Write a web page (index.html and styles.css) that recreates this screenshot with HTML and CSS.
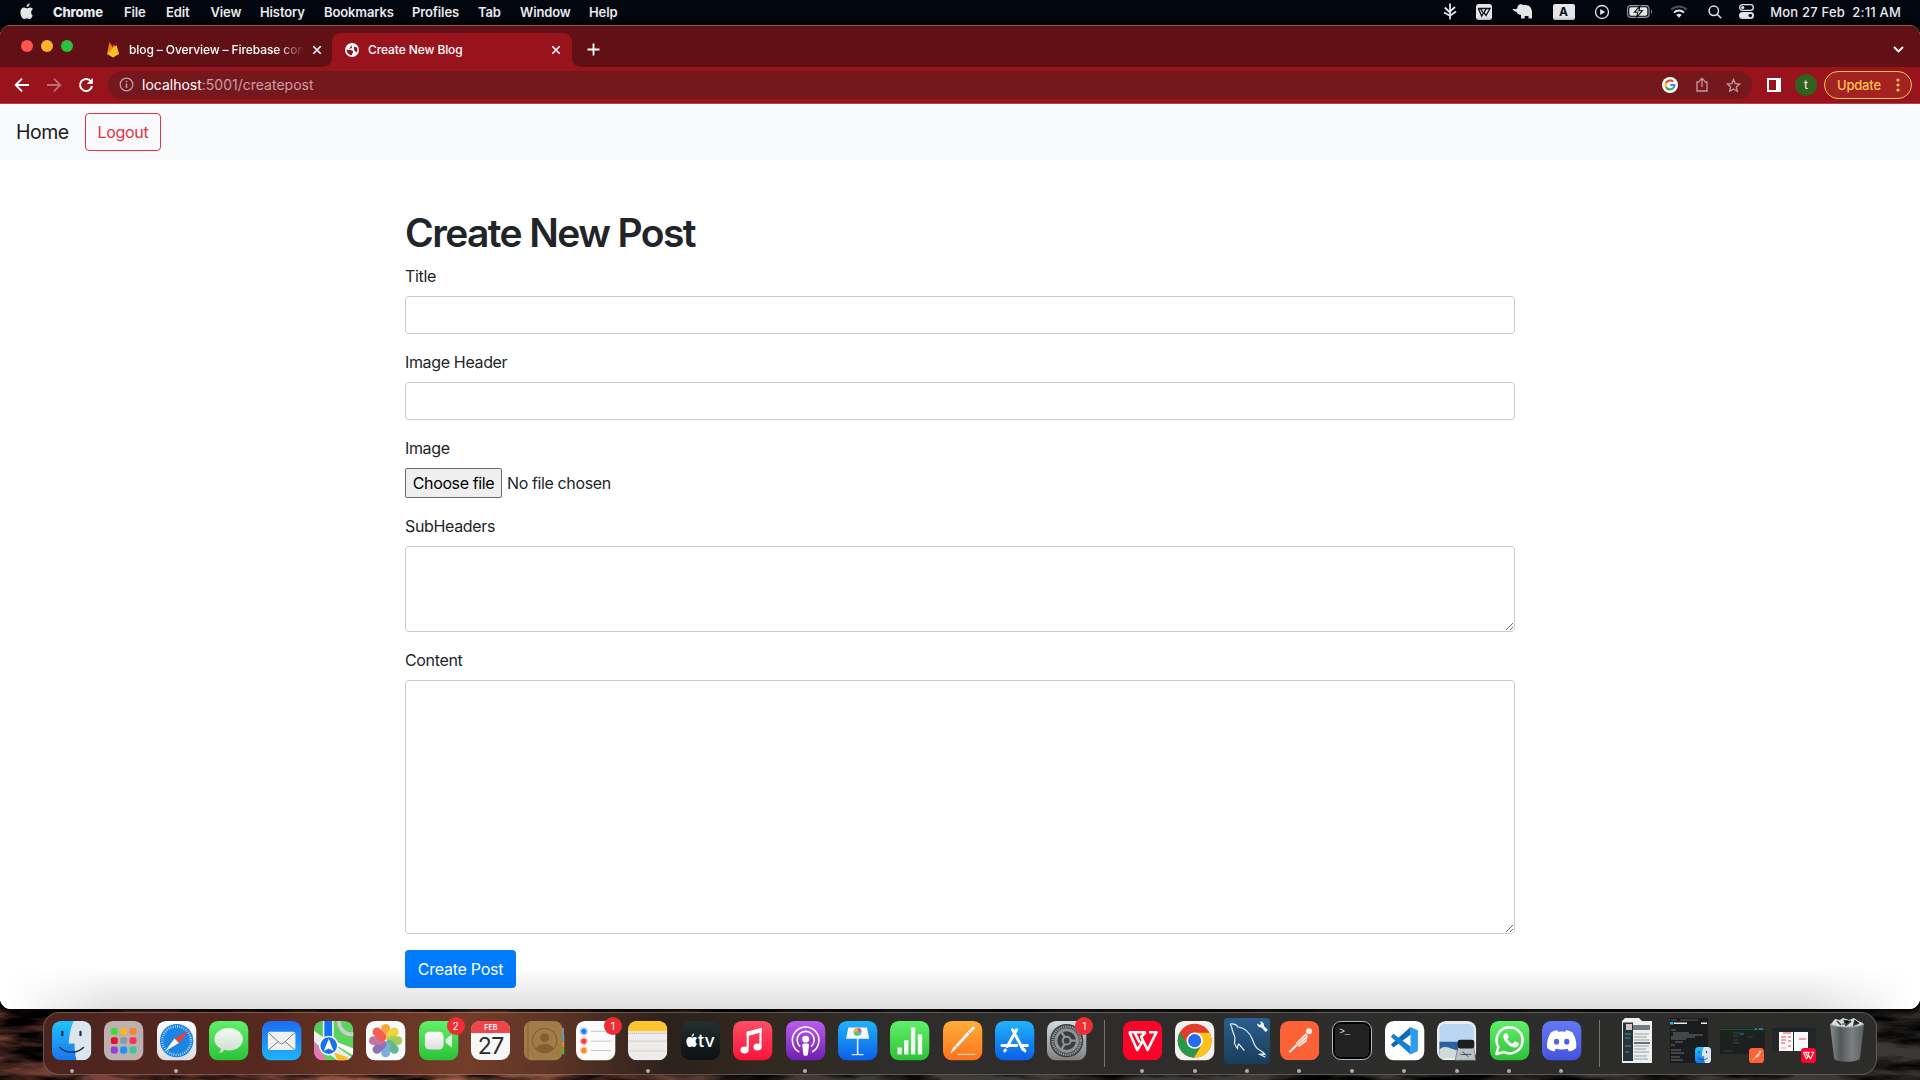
FILE: index.html
```html
<!DOCTYPE html>
<html lang="en">
<head>
<meta charset="utf-8">
<title>Create New Blog</title>
<link rel="stylesheet" href="styles.css">
</head>
<body>
<svg class="defs" width="0" height="0" aria-hidden="true">
  <defs>
    <linearGradient id="gGreen" x2="0" y2="1"><stop stop-color="#62f06a"/><stop offset="1" stop-color="#2bc237"/></linearGradient>
    <linearGradient id="gBlue" x2="0" y2="1"><stop stop-color="#1e6bf0"/><stop offset="1" stop-color="#1eb4fb"/></linearGradient>
    <linearGradient id="gSky" x2="0" y2="1"><stop stop-color="#20b4fb"/><stop offset="1" stop-color="#0b5ee8"/></linearGradient>
    <linearGradient id="gFinder" x2="0" y2="1"><stop stop-color="#1fc4fb"/><stop offset="1" stop-color="#1a74ee"/></linearGradient>
    <linearGradient id="gWhite" x2="0" y2="1"><stop stop-color="#fff"/><stop offset="1" stop-color="#dcdcdc"/></linearGradient>
    <linearGradient id="gRed" x2="0" y2="1"><stop stop-color="#fb5068"/><stop offset="1" stop-color="#fa1238"/></linearGradient>
    <linearGradient id="gPurple" x2="0" y2="1"><stop stop-color="#bc5cf0"/><stop offset="1" stop-color="#6f20b0"/></linearGradient>
    <linearGradient id="gOrange" x2="0" y2="1"><stop stop-color="#ffae38"/><stop offset="1" stop-color="#fc7320"/></linearGradient>
    <linearGradient id="gGrey" x2="0" y2="1"><stop stop-color="#cfdde4"/><stop offset="1" stop-color="#82807e"/></linearGradient>
    <linearGradient id="gSql" x2="0" y2="1"><stop stop-color="#2a5f8f"/><stop offset="1" stop-color="#1a3c58"/></linearGradient>
    <linearGradient id="gDiscord" x2="0" y2="1"><stop stop-color="#6478f5"/><stop offset="1" stop-color="#4454dc"/></linearGradient>
    <linearGradient id="gTrash"><stop stop-color="#8a8d8e"/><stop offset=".3" stop-color="#55585a"/><stop offset=".65" stop-color="#7d8081"/><stop offset="1" stop-color="#5b5e60"/></linearGradient>
    <clipPath id="tile"><rect width="40" height="40" rx="9"/></clipPath>
    <symbol id="apple" viewBox="0 0 14 17"><path d="M9.6.3c.1 1.1-.3 2-.9 2.700-.6.7-1.400 1.200-2.200 1.100-.1-1 .3-1.900.9-2.600C8 .8 8.900.4 9.600.300zM12.700 12.400c-.8 1.900-1.800 3.800-3.100 3.800-1.200 0-1.500-.7-2.700-.7s-1.600.7-2.700.7C2.300 16.200.4 12.500.4 9.300c0-3 1.800-4.900 3.800-4.900 1.200 0 2.100.8 2.900.8s1.700-.8 3.100-.8c1.100 0 2.100.6 2.800 1.500-2.500 1.500-2.100 5.200-.3 6.500z"/></symbol>
    <symbol id="close" viewBox="0 0 10 10"><path d="M1.300 1.300l7.400 7.400M8.700 1.300L1.300 8.700" stroke="#fff" stroke-width="1.600" fill="none"/></symbol>
    <symbol id="wps" viewBox="0 0 40 40"><rect width="40" height="40" rx="9" fill="#fd0328"/><path d="M6 11.500h17M6.500 11.500L14.500 29.500 20 20.500M12 12l5 10M26.500 11.500H34L25 29.500 18.500 16 23 11.500" fill="none" stroke="#fff" stroke-width="2.700" stroke-linejoin="round"/></symbol>
    <symbol id="finder" viewBox="0 0 40 40"><g clip-path="url(#tile)"><rect width="40" height="40" fill="url(#gFinder)"/><path d="M22 0C18.500 8 17.500 15 17 23h6c-.2 6 .3 11 2 17h15V0z" fill="#dde5ee"/><path d="M10.500 11v3.500M29 11v3.500" stroke="#17334d" stroke-width="2.300" stroke-linecap="round"/><path d="M8 27c7 6.500 17 6.500 24 0" fill="none" stroke="#17334d" stroke-width="1.600" stroke-linecap="round"/></g></symbol>
    <symbol id="postman" viewBox="0 0 40 40"><rect width="40" height="40" rx="9" fill="#fd6237"/><g fill="#fff0ea"><circle cx="29.500" cy="10.500" r="3"/><path d="M26 12.500l2.300 2.500-1.500 6-7.500 5.500-3.500-3.500z"/><path d="M17 24.500l-7.500 7.300" stroke="#fff0ea" stroke-width="2.200"/></g><path d="M17 23.500l9.500-8M19 25l8-7" stroke="#e66a45" stroke-width=".7"/></symbol>
    <filter id="rock" x="0" y="0" width="100%" height="100%"><feTurbulence type="fractalNoise" baseFrequency=".014 .07" numOctaves="5" seed="7"/><feColorMatrix values="0 0 0 0 0  0 0 0 0 0  0 0 0 0 0  2.800 0 0 0 -.95"/></filter>
  </defs>
</svg>

<div class="screen">
  <svg class="wallpaper" width="1920" height="90"><rect width="1920" height="90" filter="url(#rock)"/></svg>

  <header class="menubar">
    <nav class="menus">
      <span><svg class="apple" width="14" height="17"><use href="#apple"/></svg></span>
      <b>Chrome</b><span>File</span><span>Edit</span><span>View</span><span>History</span><span>Bookmarks</span><span>Profiles</span><span>Tab</span><span>Window</span><span>Help</span>
    </nav>
    <div class="status">
      <svg width="14" height="17" viewBox="0 0 14 17" fill="none" stroke="#e4e6e9" stroke-width="1.800"><path d="M7 .5v16M1.800 4.500L7 9.500M7 8.500l5-4.500M1 9.500L7 12.800l6-4.300"/></svg>
      <svg width="16" height="16" viewBox="0 0 16 16"><rect width="16" height="16" rx="3" fill="#e4e6e9"/><path d="M2 4.500h8.500L8 8.500l2 3 4-7h-3M2.300 4.500L5.700 12 10 5M4.500 4.500l2.200 4" fill="none" stroke="#0a0f18" stroke-width="1.300"/></svg>
      <svg width="21" height="17" viewBox="0 0 21 17" fill="#e4e6e9"><path d="M.5 5.800C2.500 6.500 4 6.300 5.300 5.500 5.300 2.500 7 .8 9.500 1.300c1 .2 1.500.8 2 1C16 1 20 4 20 9v6.500h-3.500V13h-3.800v2.500H9V12C6 11.800 5 10.500 4.700 8.800 3 9 1.200 7.800.5 5.800z"/></svg>
      <span class="input-source">A</span>
      <svg width="16" height="16" viewBox="0 0 16 16"><circle cx="8" cy="8" r="6.500" fill="none" stroke="#e4e6e9" stroke-width="1.300"/><path d="M6.200 5v6l5-3z" fill="#e4e6e9"/></svg>
      <svg width="26" height="13" viewBox="0 0 26 13"><rect x=".6" y=".6" width="21.500" height="11.800" rx="3.300" fill="none" stroke="#9b9ea3" stroke-width="1.100"/><rect x="2.300" y="2.300" width="18" height="8.400" rx="1.700" fill="#e4e6e9"/><path d="M24 4.500c1.200.5 1.200 3.500 0 4z" fill="#9b9ea3"/><path d="M12.800 1.200L7.500 7.200h3.300L9.800 12l5.500-6.200h-3.400z" fill="#e4e6e9" stroke="#02070f" stroke-width="1.100"/></svg>
      <svg width="18" height="13" viewBox="0 0 18 13" fill="none" stroke-width="2"><path d="M1.300 4.700a10.800 10.800 0 0 1 15.400 0" stroke="#4d5157"/><path d="M4 7.600a7 7 0 0 1 10 0" stroke="#e4e6e9"/><path d="M6.400 10a3.600 3.600 0 0 1 5.200 0L9 12.700z" fill="#e4e6e9"/></svg>
      <svg width="14" height="14" viewBox="0 0 14 14" fill="none" stroke="#e4e6e9" stroke-width="1.500"><circle cx="5.800" cy="5.800" r="4.700"/><path d="M9.200 9.200l4 4"/></svg>
      <svg width="15" height="15" viewBox="0 0 15 15"><rect x=".7" y=".7" width="13.600" height="5.600" rx="2.800" fill="none" stroke="#e4e6e9" stroke-width="1.300"/><circle cx="3.700" cy="3.500" r="1.600" fill="#e4e6e9"/><rect y="8" width="15" height="7" rx="3.500" fill="#e4e6e9"/><circle cx="11.300" cy="11.500" r="1.800" fill="#02070f"/></svg>
      <span class="clock">Mon 27 Feb&nbsp; 2:11 AM</span>
    </div>
  </header>

  <section class="window">
    <div class="tabstrip">
      <div class="lights"><i class="red"></i><i class="yellow"></i><i class="green"></i></div>
      <div class="tab">
        <svg width="14" height="17" viewBox="0 0 14 17"><path d="M1 13L3.500 1l3 5L8 3.500 13 13z" fill="#f6820d"/><path d="M1 13l9.500-9 2.500 9-6 3.500z" fill="#fdbe2c"/></svg>
        <span class="tab-title fade">blog – Overview – Firebase con</span>
        <svg width="10" height="10"><use href="#close"/></svg>
      </div>
      <div class="tab active">
        <svg width="14" height="14" viewBox="0 0 14 14"><circle cx="7" cy="7" r="7" fill="#fff"/><path d="M6.500 1.500c-1 1.500 1 2 .5 3.200-.7 1-2.300.6-2.800 1.800 1 1 3.200.2 3.800 1.700.4 1.500-1 1.800-1.200 4C4 12 1.300 9.500 1.600 6.500l2.300.7M8.500 1.800l.6 2 2.800.6c1 2.200.5 4-.3 5l-2.300-2" fill="#99131d"/></svg>
        <span class="tab-title">Create New Blog</span>
        <svg width="10" height="10"><use href="#close"/></svg>
      </div>
      <svg class="plus" width="13" height="13" viewBox="0 0 13 13"><path d="M6.500.5v12M.5 6.500h12" stroke="#fff" stroke-width="1.800"/></svg>
      <svg class="chevron" width="11" height="7" viewBox="0 0 11 7"><path d="M1 1l4.500 4.500L10 1" fill="none" stroke="#fff" stroke-width="1.800"/></svg>
    </div>

    <div class="toolbar">
      <svg width="16" height="16" viewBox="0 0 16 16" fill="none" stroke="#fff" stroke-width="1.900"><path d="M15 8H2M8 1.700L1.700 8 8 14.300"/></svg>
      <svg width="16" height="16" viewBox="0 0 16 16" fill="none" stroke="#c46a70" stroke-width="1.800"><path d="M1 8h13M8 1.700L14.300 8 8 14.300"/></svg>
      <svg width="16" height="16" viewBox="0 0 16 16" fill="none" stroke="#fff" stroke-width="2"><path d="M13 4.500A6 6 0 1 0 14 9"/><path d="M14.800 1v6H8.800z" fill="#fff" stroke="none"/></svg>
      <div class="address">
        <svg width="15" height="15" viewBox="0 0 15 15"><circle cx="7.500" cy="7.500" r="6.300" fill="none" stroke="#b3a3a8" stroke-width="1.300"/><path d="M7.500 6.500V11M7.500 3.700v1.500" stroke="#b3a3a8" stroke-width="1.500"/></svg>
        <span class="url"><em>localhost</em>:5001/createpost</span>
        <svg class="google" width="16" height="16" viewBox="0 0 16 16"><circle cx="8" cy="8" r="8" fill="#fff"/><g fill="none" stroke-width="2.100"><path d="M11.200 4.700A4.500 4.500 0 0 0 4 6" stroke="#ea4335"/><path d="M4 6a4.500 4.500 0 0 0 0 4" stroke="#fbbc05"/><path d="M4 10a4.500 4.500 0 0 0 7 1.300" stroke="#34a853"/><path d="M11 11.300A4.500 4.500 0 0 0 12.500 8H8.200" stroke="#4285f4"/></g></svg>
        <svg width="12" height="15" viewBox="0 0 12 15" fill="none" stroke="#c39a9e" stroke-width="1.300"><path d="M3.500 5H1v9h10V5H8.500M6 10V1.500M3.300 4L6 1.300 8.700 4"/></svg>
        <svg width="15" height="14" viewBox="0 0 15 14"><path d="M7.500 1.500l1.700 4.100 4.400.4-3.300 2.900 1 4.300-3.800-2.300-3.800 2.300 1-4.300L1.400 6l4.400-.4z" fill="none" stroke="#c39a9e" stroke-width="1.300"/></svg>
      </div>
      <svg width="14" height="14" viewBox="0 0 14 14"><rect x="1" y="1" width="12" height="12" fill="#99131d" stroke="#fff" stroke-width="2"/><path d="M9 0h5v14H9z" fill="#fff"/></svg>
      <span class="avatar">t</span>
      <span class="update">Update<svg width="4" height="14" viewBox="0 0 4 14" fill="#fac44f"><circle cx="2" cy="2" r="1.600"/><circle cx="2" cy="7" r="1.600"/><circle cx="2" cy="12" r="1.600"/></svg></span>
    </div>

    <div class="page">
      <nav class="navbar"><a class="brand">Home</a><a class="logout">Logout</a></nav>
      <main class="container">
        <h1>Create New Post</h1>
        <div class="group"><label>Title</label><input class="control" type="text"></div>
        <div class="group"><label>Image Header</label><input class="control" type="text"></div>
        <div class="group"><label>Image</label>
          <div class="file"><span class="file-button">Choose file</span><span>No file chosen</span></div></div>
        <div class="group"><label>SubHeaders</label><textarea class="control sub"></textarea></div>
        <div class="group"><label>Content</label><textarea class="control content"></textarea></div>
        <a class="submit">Create Post</a>
      </main>
      <div class="dock-shade"></div>
    </div>
  </section>

  <footer class="dock">
    <div class="app running"><svg class="icon"><use href="#finder"/></svg></div>
    <div class="app"><svg class="icon" viewBox="0 0 40 40"><rect width="40" height="40" rx="9" fill="#bdb0b1"/>
      <g><rect x="7" y="7" width="7" height="7" rx="2" fill="#45d83c"/><rect x="16.500" y="7" width="7" height="7" rx="2" fill="#fcb524"/><rect x="26" y="7" width="7" height="7" rx="2" fill="#f6852a"/><rect x="7" y="16.500" width="7" height="7" rx="2" fill="#e2132b"/><rect x="16.500" y="16.500" width="7" height="7" rx="2" fill="#8c9ba3"/><rect x="26" y="16.500" width="7" height="7" rx="2" fill="#fb3561"/><rect x="7" y="26" width="7" height="7" rx="2" fill="#9440cf"/><rect x="16.500" y="26" width="7" height="7" rx="2" fill="#1e92fb"/><rect x="26" y="26" width="7" height="7" rx="2" fill="#37c99b"/></g></svg></div>
    <div class="app running"><svg class="icon" viewBox="0 0 40 40"><rect width="40" height="40" rx="9" fill="url(#gWhite)"/><circle cx="20" cy="20" r="17" fill="#1c85e4"/><circle cx="20" cy="20" r="14.500" fill="none" stroke="#bfe0fa" stroke-width="2.500" stroke-dasharray=".8 1.480"/><path d="M32.500 10L22.300 22.300l-4.500-4.600z" fill="#fb3b30"/><path d="M8 31l9.800-13.300 4.500 4.600z" fill="#f3f5f7"/></svg></div>
    <div class="app"><svg class="icon" viewBox="0 0 40 40"><rect width="40" height="40" rx="9" fill="url(#gGreen)"/><path d="M20 7c8.300 0 14.500 5 14.500 11.500S28.300 30 20 30c-1.500 0-3-.2-4.300-.5C14.500 31 12.500 32.500 10.500 32.500c1-1.300 1.500-3 1.300-4.700C8 25.700 5.500 22.500 5.500 18.500 5.500 12 11.700 7 20 7z" fill="url(#gWhite)" opacity=".92"/></svg></div>
    <div class="app"><svg class="icon" viewBox="0 0 40 40"><rect width="40" height="40" rx="9" fill="url(#gBlue)"/><rect x="6" y="11" width="28" height="18.500" rx="2" fill="#f0f1f2"/><path d="M6.700 12l11 10.200c1.500 1.300 3 1.300 4.600 0L33.300 12M7 29l9.500-8M33 29l-9.500-8" fill="none" stroke="#76797c" stroke-width="1"/></svg></div>
    <div class="app"><svg class="icon" viewBox="0 0 40 40"><g clip-path="url(#tile)"><rect width="40" height="40" fill="#5bd35c"/><path d="M0 0h10v19L0 11z" fill="#58c95b"/><path d="M0 10l40 28v4H26L0 21z" fill="#eceef0"/><path d="M0 20l13 20H0z" fill="#e975b8"/><path d="M24 40l-4-8 14 5 1 3z" fill="#fbbc25"/><path d="M9 0h11v22H9z" fill="#fff"/><path d="M10.500 0h8v18h-8z" fill="#1670f1"/><circle cx="38" cy="1" r="12.500" fill="none" stroke="#c9ccd0" stroke-width="4"/><path d="M20 20l20 8v7L20 23z" fill="#fff"/><circle cx="15" cy="25" r="10" fill="#fff"/><circle cx="15" cy="25" r="8.500" fill="#1873e8"/><path d="M15 18l5 12.500-5-2.500-5 2.500z" fill="#fff"/></g></svg></div>
    <div class="app"><svg class="icon" viewBox="0 0 40 40"><rect width="40" height="40" rx="9" fill="#fafafa"/><g opacity=".88"><rect x="15.500" y="3" width="9" height="16" rx="4.500" fill="#f99a26"/><rect x="15.500" y="3" width="9" height="16" rx="4.500" fill="#e8d02a" transform="rotate(45 20 20)"/><rect x="15.500" y="3" width="9" height="16" rx="4.500" fill="#9bc83e" transform="rotate(90 20 20)"/><rect x="15.500" y="3" width="9" height="16" rx="4.500" fill="#4fae7e" transform="rotate(135 20 20)"/><rect x="15.500" y="3" width="9" height="16" rx="4.500" fill="#6ba2d9" transform="rotate(180 20 20)"/><rect x="15.500" y="3" width="9" height="16" rx="4.500" fill="#7d62b4" transform="rotate(225 20 20)"/><rect x="15.500" y="3" width="9" height="16" rx="4.500" fill="#bd6396" transform="rotate(270 20 20)"/><rect x="15.500" y="3" width="9" height="16" rx="4.500" fill="#f4493f" transform="rotate(315 20 20)"/></g></svg></div>
    <div class="app"><svg class="icon" viewBox="0 0 40 40"><rect width="40" height="40" rx="9" fill="url(#gGreen)"/><rect x="6" y="11" width="19" height="18" rx="4.500" fill="url(#gWhite)"/><path d="M27 18.500l6.500-5v13.500L27 22z" fill="#def5e0"/></svg><span class="badge">2</span></div>
    <div class="app"><div class="icon calendar"><span class="month">FEB</span><span class="day">27</span></div></div>
    <div class="app"><svg class="icon" viewBox="0 0 40 40"><path d="M36 7h4.500v8H36z" fill="#8e9aa0"/><path d="M36 14h5v7h-5z" fill="#37a8e0"/><path d="M36 21h5v6h-5z" fill="#f08c22"/><path d="M36 27h5v7h-5z" fill="#3cb950"/><rect width="39" height="40" rx="8" fill="#a27c45"/><path d="M4 1v38" stroke="#7f5f33" stroke-width=".8"/><g fill="none" stroke="#785a30" stroke-width="1"><circle cx="21" cy="20" r="12.500"/></g><g fill="#80602f"><circle cx="21" cy="17" r="4.500"/><path d="M12 28c3-6 15-6 18 0-5 5-13 5-18 0z"/></g></svg></div>
    <div class="app"><svg class="icon" viewBox="0 0 40 40"><rect width="40" height="40" rx="9" fill="#fbfbfb"/><g stroke-width="1" fill="#157efb"><circle cx="8" cy="10.500" r="2.700"/><circle cx="8" cy="10.500" r="3.600" fill="none" stroke="#8fbcf0"/></g><g fill="#f33b40"><circle cx="8" cy="20.500" r="2.700"/><circle cx="8" cy="20.500" r="3.600" fill="none" stroke="#f4a5a6"/></g><g fill="#f58a1f"><circle cx="8" cy="30" r="2.700"/><circle cx="8" cy="30" r="3.600" fill="none" stroke="#f2c493"/></g><path d="M15 10.500h21M15 20.500h21M15 30h21" stroke="#c9c9c9" stroke-width="1"/></svg><span class="badge">1</span></div>
    <div class="app running"><svg class="icon" viewBox="0 0 40 40"><g clip-path="url(#tile)"><rect width="40" height="40" fill="#eeecea"/><path d="M0 0h40v10.500H0z" fill="#fdc62f"/><path d="M0 12.500h40" stroke="#a5a29c" stroke-dasharray="1 1"/><path d="M0 20.500h40M0 30.500h40" stroke="#d3d0cc"/></g></svg></div>
    <div class="app"><div class="icon tv"><svg width="12" height="15"><use href="#apple"/></svg>tv</div></div>
    <div class="app"><svg class="icon" viewBox="0 0 40 40"><rect width="40" height="40" rx="9" fill="url(#gRed)"/><path d="M15 28V12l13-3.500v17" fill="none" stroke="#fff" stroke-width="2.200"/><path d="M14 11l15-4v4.500l-15 4z" fill="#fff"/><ellipse cx="11.800" cy="29.500" rx="4.200" ry="3.500" fill="#fff"/><ellipse cx="25" cy="26.500" rx="4.200" ry="3.500" fill="#fff"/></svg></div>
    <div class="app running"><svg class="icon" viewBox="0 0 40 40"><rect width="40" height="40" rx="9" fill="url(#gPurple)"/><g fill="none" stroke="#fff" stroke-width="1.600"><path d="M13.500 31.500a13.500 13.500 0 1 1 13 0"/><path d="M14.500 26a8.700 8.700 0 1 1 11 0"/></g><circle cx="20" cy="18.500" r="3.500" fill="#fff"/><path d="M16.500 24.500c0-2 7-2 7 0L22.300 34c-.4 1.800-4.200 1.800-4.600 0z" fill="#fff"/></svg></div>
    <div class="app"><svg class="icon" viewBox="0 0 40 40"><rect width="40" height="40" rx="9" fill="url(#gSky)"/><path d="M19.200 17h1.600v17h-1.600zM14 33.500h12v1.300H14z" fill="#dfe8f2"/><path d="M10.500 6.500h19l2.300 11.500H8.200z" fill="#f5f7f9"/><circle cx="20" cy="11" r="4" fill="#4db6ec"/><path d="M20 11V7a4 4 0 0 1 4 4z" fill="#f15c50"/><path d="M20 11v4a4 4 0 0 1-4-4z" fill="#60c851"/><path d="M20 11h-4a4 4 0 0 1 4-4z" fill="#f3b92d"/></svg></div>
    <div class="app"><svg class="icon" viewBox="0 0 40 40"><rect width="40" height="40" rx="9" fill="url(#gGreen)"/><path d="M7.500 27h4.500v7H7.500zM14.300 19.500h4.500V34h-4.500zM21.300 6.500h4.500V34h-4.500zM28.300 13.500h4.500V34h-4.500z" fill="#f3f6f3"/></svg></div>
    <div class="app"><svg class="icon" viewBox="0 0 40 40"><rect width="40" height="40" rx="9" fill="url(#gOrange)"/><path d="M32.500 7.500L12 29.500l-4.500 3.500 2.500-5.500L29.500 6c1.200-1.200 4 .2 3 1.500z" fill="#f8f4ef"/><path d="M25 11l4 3.500M12 25l3 2.500" stroke="#a99a8c" stroke-width=".8"/><path d="M15 34h18" stroke="#fbd3ac" stroke-width="1.200"/></svg></div>
    <div class="app"><svg class="icon" viewBox="0 0 40 40"><rect width="40" height="40" rx="9" fill="url(#gSky)"/><g stroke="#fff" stroke-width="3" stroke-linecap="round"><path d="M18 9l10.500 20M22 9L12.500 26M7 25h15M28 25h5M29.500 29l1 1.500M10.500 29.500l-.5 1"/></g></svg></div>
    <div class="app"><svg class="icon" viewBox="0 0 40 40"><rect width="40" height="40" rx="9" fill="url(#gGrey)"/><circle cx="20" cy="20" r="17" fill="#3a3d3f"/><circle cx="20" cy="20" r="14.300" fill="none" stroke="#909598" stroke-width="2.500" stroke-dasharray="1.500 .75"/><circle cx="20" cy="20" r="11" fill="none" stroke="#8f9497" stroke-width="3"/><circle cx="20" cy="20" r="4" fill="none" stroke="#8f9497" stroke-width="2"/><path d="M24 20h8M18 16.500L14 10M18 23.500L14 30" stroke="#8f9497" stroke-width="2.300"/></svg><span class="badge">1</span></div>
    <div class="separator"></div>
    <div class="app running"><svg class="icon"><use href="#wps"/></svg></div>
    <div class="app running"><svg class="icon" viewBox="0 0 40 40"><rect width="40" height="40" rx="9" fill="#f1f1f0"/><circle cx="20" cy="20" r="17.300" fill="#e33b2e"/><path d="M20 12h15.300A17.300 17.300 0 0 1 19 37.300l8.300-13.100z" fill="#fcc31e"/><path d="M12.800 24.300L5 11.500A17.300 17.300 0 0 0 19 37.300l8-13z" fill="#259a4a"/><circle cx="20" cy="20" r="8.300" fill="#fff"/><circle cx="20" cy="20" r="6.700" fill="#216ee8"/></svg></div>
    <div class="app running"><svg class="icon wide" viewBox="0 0 46 46"><rect width="46" height="46" rx="4" fill="url(#gSql)"/><path d="M6 6c3-.5 6 0 8 3 7 1 12 6 14.500 12.500 1.500 4.500 2.500 8.500 7 10.500 2 1 4 2.500 5.500 4.500-2-.5-4-.5-5.500-.2l6 3M6 6c1 1.500 2 3 2 5 1 3 1.500 5 2.500 7 1 2 0 5 0 7 .5 2.500 1.500 4 3 5.500 0-2 .2-3 1-4.500 2 1 3.500 4.500 6 6.500" fill="none" stroke="#e7eff5" stroke-width="1.200"/><path d="M36 3.500c2.500 0 4.500 2 4 4.500l4 4-2.500 2-4-4.500c-2.300.3-4.500-1.500-4.500-4l3 1.500 1-1.500z" fill="#f0f5f8"/></svg></div>
    <div class="app running"><svg class="icon"><use href="#postman"/></svg></div>
    <div class="app running"><div class="icon terminal"><span>&gt;_</span></div></div>
    <div class="app running"><svg class="icon" viewBox="0 0 40 40"><rect width="40" height="40" rx="9" fill="#fff"/><path d="M26 6l7.500 3.500v21L26 34z" fill="#2f9cee"/><path d="M26 6L6 24l2.500 3L26 14z" fill="#0a6ab8"/><path d="M26 34L6 16l2.500-3L26 26z" fill="#1581d0"/></svg></div>
    <div class="app running"><svg class="icon" viewBox="0 0 40 40"><g clip-path="url(#tile)"><rect width="40" height="40" fill="#ececec"/><rect x="2.500" y="3" width="35" height="33" rx="5" fill="#b9d7f2"/><path d="M2.500 21h35v12a4 4 0 0 1-4 4h-27a4 4 0 0 1-4-4z" fill="#2e609d"/><path d="M2.500 29c6-5 10-1 15 0s8 4 10 9H6.500a4 4 0 0 1-4-4z" fill="#cfdad9"/></g><path d="M22 24h15l2.500 16h-21z" fill="#b9c2c8" stroke="#555" stroke-width=".6"/><rect x="21" y="19" width="17" height="9" rx="2.500" fill="#1c1d20"/><path d="M24 34h11M26 31.500l6 5" stroke="#454b50"/></svg></div>
    <div class="app running"><svg class="icon" viewBox="0 0 40 40"><rect width="40" height="40" rx="9" fill="url(#gGreen)"/><path d="M6.500 33.500l2-7A13.300 13.300 0 1 1 13.800 31.500z" fill="none" stroke="#fff" stroke-width="2.600" stroke-linejoin="round"/><path d="M15.500 12.500c1.300-.7 2-.2 2.500 1l1 2.500c.2.800-.8 1.800-1.300 2.300 1.200 2.300 3 3.800 5.200 4.800l1.800-2c.4-.4.8-.4 1.300-.2l3 1.600c.8.500.3 2.300-.4 3.200-4.600 4.500-15.700-4.400-15-10.500.2-1.200 1-2.200 1.900-2.700z" fill="#fff"/></svg></div>
    <div class="app running"><svg class="icon" viewBox="0 0 40 40"><rect width="40" height="40" rx="9" fill="url(#gDiscord)"/><path d="M15.500 9.500l.8 1.500c2.500-.4 4.900-.4 7.400 0l.8-1.500c2.500.4 4.500 1.100 6.500 2.300 3.200 5 4.400 10 3.800 15.700-2.200 1.800-4.500 3-7.300 3.500l-1.600-2.700c-3.700 1-8.100 1-11.800 0L12.500 31c-2.800-.5-5-1.700-7.300-3.500-.6-5.700.6-10.700 3.800-15.700 2-1.200 4-1.900 6.500-2.300z" fill="#fff"/><ellipse cx="14.800" cy="21" rx="2.700" ry="3" fill="#4f61e6"/><ellipse cx="25.200" cy="21" rx="2.700" ry="3" fill="#4f61e6"/></svg></div>
    <div class="separator"></div>
    <div class="app"><svg class="preview" width="30" height="46" viewBox="0 0 30 46"><path d="M0 4l3-3h14l3 3h10v42H0z" fill="#eef0f0"/><path d="M1 5.500h10V44H1z" fill="#24343b"/><path d="M11 8h17v5H11z" fill="#6f7d83"/><rect x="4" y="7" width="6" height="6" fill="#d8c5bc"/><path d="M12 17h15M12 20h13M12 23h15M12 29h15M12 32h12M12 35h15M12 39h13M12 42h14" stroke="#b3babd" stroke-width="1.400"/><path d="M12 26h16" stroke="#3a474d" stroke-width="1.500"/><path d="M3 17h6M3 21h5M3 29h6M3 35h4" stroke="#71818a"/></svg></div>
    <div class="app"><svg class="preview" width="46" height="46" viewBox="0 0 46 46"><path d="M4 1h38v45H4z" fill="#1b1c1d"/><path d="M5 3h6M14 3h18" stroke="#454648" stroke-width="1.500"/><rect x="4" y="5" width="3.500" height="2.500" fill="#22b1f7"/><path d="M8 6.300h13M35 6.300h6" stroke="#e9e9e9" stroke-width="1.500"/><path d="M5 13h5M7 16h16M7 18h30M5 20h24M5 22h15M9 25h8M5 28h4M5 33h10M5 36h13M5 40h9M5 43h12" stroke="#77797b" stroke-width=".9"/><svg x="29" y="30" width="16" height="16"><use href="#finder"/></svg></svg></div>
    <div class="app"><svg class="preview" width="46" height="46" viewBox="0 0 46 46"><path d="M1 11h45v26H1z" fill="#1c201f"/><path d="M1 12.500h45" stroke="#175235" stroke-width="1.500"/><path d="M14 16h8M14 19h6M28 20h6M14 23h5M14 26h7M4 34h10" stroke="#3b4241"/><path d="M21 17h4" stroke="#1b62a4" stroke-width="1.500"/><path d="M36 12h2M40 12h4" stroke="#2b8cd8" stroke-width="1.500"/><svg x="30" y="31" width="15" height="15"><use href="#postman"/></svg></svg></div>
    <div class="app"><svg class="preview" width="46" height="46" viewBox="0 0 46 46"><path d="M1 11h44v23H1z" fill="#242629"/><path d="M2 12.500h42" stroke="#15252e" stroke-width="2"/><path d="M8 15h14v19H8zM23 15h14v19H23z" fill="#fafafa"/><path d="M12 16h8M10 20h5M10 23h5M10 26h4M17 20h3M17 24h3M17 29h3M28 22h7" stroke="#e34c50"/><path d="M10 31h5" stroke="#e9a2a2"/><svg x="30" y="31" width="15" height="15"><use href="#wps"/></svg></svg></div>
    <div class="app"><svg class="preview" width="36" height="46" viewBox="0 0 36 46"><path d="M2 7L6 2l5 1 3-2 6 2 5-2 4 3 5 2-1 5H3z" fill="#d9dcdc"/><path d="M8 4l4 4M15 3l2 5 5-4M26 3l-1 5 5-2" stroke="#373e3c" stroke-width="1.700"/><path d="M13 7h3" stroke="#3eae6f" stroke-width="2"/><path d="M1 7c5 4 29 4 34 0l-4 34c-1 5-25 5-26 0z" fill="url(#gTrash)"/><path d="M1 7c5 4 29 4 34 0" fill="none" stroke="#a6a8a9"/></svg></div>
  </footer>
</div>
</body>
</html>
```
FILE: styles.css
```css
* { box-sizing: border-box; }
body { margin: 0; font-family: Inter, "Liberation Sans", sans-serif; color: #212529; overflow: hidden; }
svg { display: block; flex: none; }
.defs { position: absolute; }

.screen {
  position: relative; width: 1920px; height: 1080px; display: flex; flex-direction: column;
  background: linear-gradient(90deg, #6e3c33 0, #a35e49 25%, #6e4033 33%, #443a35 42%, #3f3a35 75%, #3c3835 100%);
}
.wallpaper { position: absolute; left: 0; bottom: 0; }

/* Menu bar */
.menubar {
  position: relative; height: 35px; margin-bottom: -10px; padding-bottom: 12px;
  display: flex; justify-content: space-between; background: #02070f;
  color: #e8eaec; font-size: 13px; font-weight: 600; white-space: nowrap;
}
.menus {
  display: grid; align-items: center; padding-left: 20px; letter-spacing: -.12px;
  grid-template-columns: 33px 71px 42px 44.500px 49.500px 64px 88px 66px 42px 69px 40px;
}
.menus b { font-weight: 800; letter-spacing: -.2px; }
.apple { fill: #e4e6e9; }
.status {
  display: grid; align-items: center; justify-items: center; padding-right: 19px;
  grid-template-columns: 34px 34px 43px 39px 38px 38px 40px 31px 33px 138px;
}
.input-source { width: 22px; height: 16px; border-radius: 2px; background: #e4e6e9; color: #0a0f18; font-size: 12px; line-height: 16px; font-weight: 700; text-align: center; }
.clock { justify-self: end; font-weight: 500; letter-spacing: .2px; }

/* Browser window */
.window { position: relative; height: 984px; display: flex; flex-direction: column; border-radius: 11px; overflow: hidden; background: #fff; box-shadow: 0 0 5px 3px #000; }
.tabstrip { height: 42px; flex: none; display: flex; align-items: flex-end; background: #611015; border-top: 1px solid #8c5457; }
.lights { align-self: center; display: flex; gap: 8px; padding-left: 21px; width: 90px; margin-top: -1px; }
.lights i { width: 12px; height: 12px; border-radius: 50%; }
.red { background: #ff5450; }
.yellow { background: #ffb02f; }
.green { background: #2ac23c; }
.tab { width: 242px; height: 34px; display: flex; align-items: center; padding: 0 10px 1px 16px; color: #fff; font-size: 12px; font-weight: 500; letter-spacing: -.1px; }
.tab-title { flex: 1; margin: 0 8px 0 9px; overflow: hidden; white-space: nowrap; }
.fade { -webkit-mask-image: linear-gradient(90deg, #000 85%, transparent); mask-image: linear-gradient(90deg, #000 85%, transparent); }
.active {
  width: 256px; height: 34px; margin: 0 -8px; padding: 0 19px 1px 21px;
  background:
    radial-gradient(circle at 0 0, transparent 7.500px, #99131d 8px) left bottom / 8px 8px no-repeat,
    radial-gradient(circle at 100% 0, transparent 7.500px, #99131d 8px) right bottom / 8px 8px no-repeat,
    radial-gradient(circle at 100% 100%, #99131d 7.500px, transparent 8px) 8px 0 / 8px 8px no-repeat,
    radial-gradient(circle at 0 100%, #99131d 7.500px, transparent 8px) 240px 0 / 8px 8px no-repeat,
    linear-gradient(#99131d, #99131d) 16px 0 / 224px 8px no-repeat,
    linear-gradient(#99131d, #99131d) 8px 8px / 240px 26px no-repeat;
}
.plus { margin: 0 0 11px 15px; }
.chevron { margin: 0 16px 14px auto; }

.toolbar { height: 37px; flex: none; display: flex; align-items: center; padding: 0 8px 1px 14px; gap: 16px; background: #99131d; border-bottom: 1px solid #b0434b; }
.address { flex: 1; height: 28px; margin-left: -2px; border-radius: 14px; background: #75181e; display: flex; align-items: center; padding: 0 11px 0 11px; }
.url { margin-left: 8px; margin-right: auto; font-size: 14px; color: #cc9da0; }
.url em { font-style: normal; color: #fff; }
.google { margin-right: 18px; }
.google + svg { margin-right: 18px; }
.toolbar > .address + svg { margin-left: -1px; }
.avatar { width: 22px; height: 22px; margin-left: -2px; border-radius: 50%; background: #30611f; color: #fff; font-size: 12px; line-height: 21px; text-align: center; }
.update { width: 88px; height: 28px; margin-left: -9px; border: 1px solid #fac44f; border-radius: 14px; background: #a32222; color: #fac44f; font-size: 13px; font-weight: 500; display: flex; align-items: center; justify-content: space-between; padding: 0 11px 0 12px; letter-spacing: -.2px; }

/* Web page */
.page { position: relative; flex: 1; display: flex; flex-direction: column; background: #fff; font-size: 16px; line-height: 24px; }
.navbar { height: 56px; display: flex; align-items: center; gap: 16px; padding-left: 16px; background: #f8f9fa; }
.brand { width: 53px; color: #1b1b1b; font-size: 19.500px; letter-spacing: -.5px; }
.logout { width: 76px; height: 38px; border: 1px solid #dc3545; border-radius: 4px; color: #dc3545; line-height: 36px; text-align: center; letter-spacing: -.3px; }
.container { width: 1110px; margin: 48px auto 0; }
h1 { margin: 0 0 8px; font-size: 39px; line-height: 50px; height: 48px; font-weight: 600; letter-spacing: -1.600px; }
.group { margin-bottom: 16px; }
label { display: block; margin-bottom: 8px; letter-spacing: -.35px; }
.control { display: block; width: 100%; height: 38px; padding: 6px 12px; border: 1px solid #c6cdd4; border-radius: 4px; background: #fff; }
.sub { height: 86px; }
.content { height: 254px; }
.file { height: 30px; display: flex; align-items: center; gap: 5px; letter-spacing: -.38px; }
.file-button { width: 97px; height: 30px; border: 1px solid #6b6b6b; border-radius: 2px; background: #efefef; color: #000; line-height: 28px; text-align: center; }
.submit { display: block; width: 111px; height: 38px; border-radius: 4px; background: #007bff; color: #fff; line-height: 38px; text-align: center; letter-spacing: -.25px; }
.dock-shade { position: absolute; left: 0; right: 0; bottom: 0; height: 42px; background: linear-gradient(transparent, rgba(0,0,0,.12)); -webkit-mask-image: linear-gradient(90deg, transparent 5px, #000 110px, #000 1810px, transparent 1915px); mask-image: linear-gradient(90deg, transparent 5px, #000 110px, #000 1810px, transparent 1915px); }

/* Dock */
.dock {
  position: relative; width: 1834px; height: 63px; margin: 3px 0 0 43px; padding-left: 1.500px;
  display: flex; align-items: flex-start; border: 1px solid rgba(255,255,255,.22); border-radius: 16px;
  background: linear-gradient(90deg, #4c241e 0, #56291f 12%, #733d29 23%, #5b3426 28%, #2c211b 34%, #32281f 39%, #2e2d2b 46%, #2c2c2a 100%);
}
.app { position: relative; width: 52.400px; height: 61px; display: flex; justify-content: center; padding-top: 8px; }
.icon { width: 39.300px; height: 39.300px; border-radius: 9px; overflow: visible; }
.wide { width: 46px; height: 46px; margin-top: -3px; }
.preview { margin-top: -4px; }
.running::after { content: ""; position: absolute; bottom: 1px; left: 24px; width: 4px; height: 4px; border-radius: 50%; background: #b9aaa5; }
.badge { position: absolute; top: 4px; right: 0; width: 18px; height: 18px; border-radius: 50%; background: #ee2e34; color: #fff; font-size: 10px; line-height: 18px; text-align: center; }
.separator { width: 23px; height: 47px; margin-top: 7px; background: linear-gradient(#747371, #747371) center / 1px 100% no-repeat; }
.calendar { display: flex; flex-direction: column; text-align: center; overflow: hidden; background: #f7f7f6; }
.month { height: 12px; background: #f0444a; color: #fff; font-size: 7px; line-height: 13px; font-weight: 600; }
.day { color: #2b2b2b; font-size: 23px; line-height: 26px; letter-spacing: -.5px; }
.tv { display: flex; align-items: center; justify-content: center; background: linear-gradient(#24302f, #0c1011); color: #fff; font-size: 18px; font-weight: 500; fill: #fff; }
.terminal { border: 1px solid #a9bbc0; background: #000; padding: 2px; }
.terminal span { display: block; height: 33px; padding: 3px 4px; border-radius: 5px; background: #222; color: #eee; font: 9px/10px "Liberation Mono", monospace; }
```
